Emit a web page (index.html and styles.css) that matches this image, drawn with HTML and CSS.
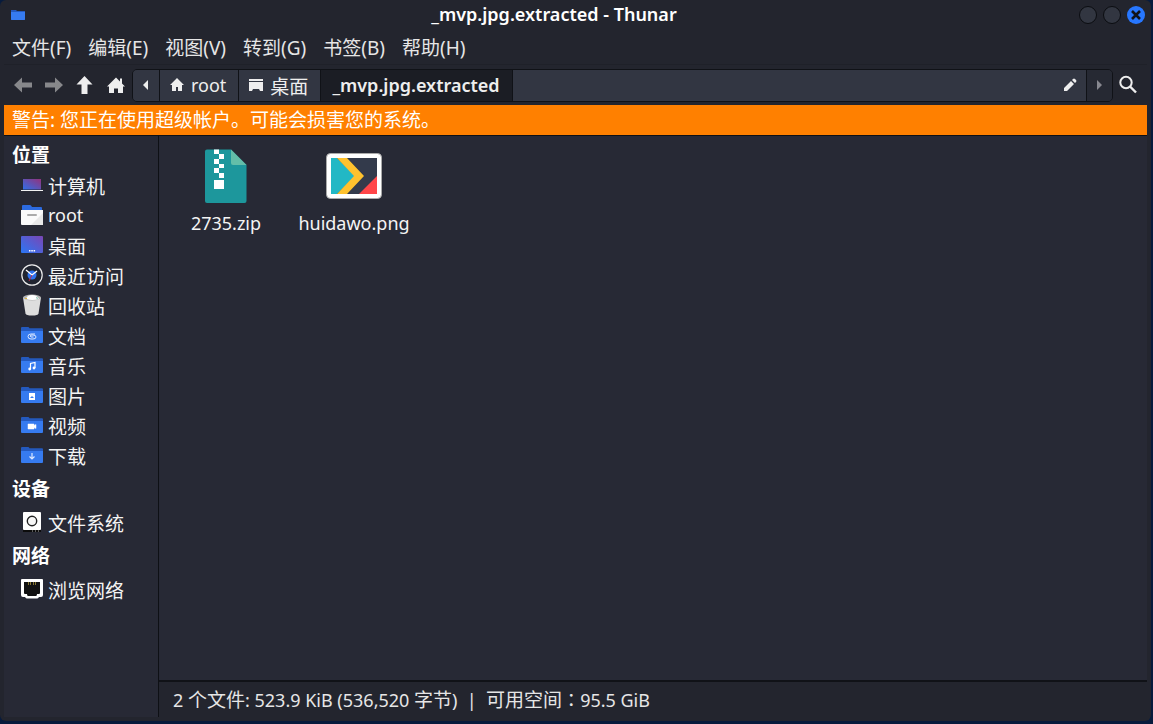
FILE: index.html
```html
<!DOCTYPE html>
<html lang="zh-CN">
<head>
<meta charset="utf-8">
<title>_mvp.jpg.extracted - Thunar</title>
<link rel="stylesheet" href="styles.css">
</head>
<body>
<svg class="defs" aria-hidden="true">
  <defs>
    <linearGradient id="screen" x1="0" y1="1" x2="1" y2="0"><stop offset="0" stop-color="#2f6fe8"/><stop offset="1" stop-color="#93327c"/></linearGradient>
    <linearGradient id="desk" x1="0" y1="1" x2="1" y2="0"><stop offset="0" stop-color="#2a77f5"/><stop offset="1" stop-color="#7b46b4"/></linearGradient>
    <symbol id="folder" viewBox="0 0 22 22"><path d="M0 5V4q0-1 1-1h6q1 0 1.500 1.200H21q1 0 1 1V9H0z" fill="#2459bd"/><path d="M0 7h22v11q0 1-1 1H1q-1 0-1-1z" fill="#367bf0"/></symbol>
  </defs>
</svg>
<div class="window">
  <header class="titlebar">
    <svg class="app-icon" viewBox="0 0 14 10"><path d="M0 0h5l1 1h8v9H0z" fill="#2459bd"/><path d="M0 2h14v7q0 1-1 1H1q-1 0-1-1z" fill="#367bf0"/></svg>
    <h1 class="title">_mvp.jpg.extracted - Thunar</h1>
    <div class="controls">
      <button class="control" type="button" aria-label="最小化"></button>
      <button class="control" type="button" aria-label="最大化"></button>
      <button class="control close" type="button" aria-label="关闭"><svg viewBox="0 0 18 18"><path d="M5 5l8 8M13 5l-8 8" stroke="#10131a" stroke-width="2.600"/></svg></button>
    </div>
  </header>
  <nav class="menubar">
    <button type="button">文件(F)</button>
    <button type="button">编辑(E)</button>
    <button type="button">视图(V)</button>
    <button type="button">转到(G)</button>
    <button type="button">书签(B)</button>
    <button type="button">帮助(H)</button>
  </nav>
  <div class="toolbar">
    <button class="tool dim" type="button" aria-label="后退"><svg viewBox="0 0 20 20"><path d="M1 10l8-7.500v5h10v5H9v5z" fill="currentColor"/></svg></button>
    <button class="tool dim" type="button" aria-label="前进"><svg viewBox="0 0 20 20"><path d="M19 10l-8-7.500v5H1v5h10v5z" fill="currentColor"/></svg></button>
    <button class="tool" type="button" aria-label="上级"><svg viewBox="0 0 20 20"><path d="M9.500 1l8 8.500h-5V19h-6V9.500h-5z" fill="currentColor"/></svg></button>
    <button class="tool" type="button" aria-label="主目录"><svg viewBox="0 0 20 20"><path d="M10 2.500l4 4v-3h2v5l3 3h-2V18h-5v-4.500H8V18H3v-6.500H1z" fill="currentColor"/></svg></button>
    <div class="pathbar">
      <button class="crumb arrow" type="button" aria-label="向左"><svg viewBox="0 0 6 10"><path d="M5 0v10L0 5z" fill="currentColor"/></svg></button>
      <button class="crumb" type="button"><svg viewBox="0 0 16 16"><path d="M8 1l7 7h-2v6h-4v-4H7v4H3V8H1z" fill="currentColor"/></svg>root</button>
      <button class="crumb" type="button"><svg viewBox="0 0 16 16"><path d="M1 2h14v2H1zM1 5h14v9h-3l-1-2H5l-1 2H1z" fill="currentColor"/></svg><span class="cjk low">桌面</span></button>
      <button class="crumb current" type="button">_mvp.jpg.extracted</button>
      <button class="crumb edit" type="button" aria-label="编辑路径"><svg viewBox="0 0 14 14"><path d="M1 10l7-7 3 3-7 7H1zM9 2l1-1q1-1 2 0l1 1q1 1 0 2l-1 1z" fill="currentColor"/></svg></button>
      <button class="crumb arrow off" type="button" aria-label="向右"><svg viewBox="0 0 6 10"><path d="M0 0v10l5-5z" fill="currentColor"/></svg></button>
    </div>
    <button class="tool search" type="button" aria-label="搜索"><svg viewBox="0 0 20 20"><circle cx="8" cy="7.500" r="5.700" fill="none" stroke="currentColor" stroke-width="2"/><path d="M12 11.500l6 6" stroke="currentColor" stroke-width="2.400"/></svg></button>
  </div>
  <p class="warning">警告: 您正在使用超级帐户。可能会损害您的系统。</p>
  <div class="body">
    <aside class="sidebar">
      <h2>位置</h2>
      <a href="#"><svg viewBox="0 0 22 22"><path d="M2 5h18v10.500H2z" fill="url(#screen)"/><path d="M0 16h22v1H0z" fill="#f2f2f2"/></svg><span class="cjk low">计算机</span></a>
      <a href="#"><svg viewBox="0 0 22 22"><path d="M1 6V2q0-1 1-1h7q1 0 2 2h9q1 0 1 1v2z" fill="#2c6be0"/><path d="M0 6h22v14q0 1-1 1H1q-1 0-1-1z" fill="#fafafa"/><path d="M22 9v12H10z" fill="#e8e8e8"/><rect x="6" y="10" width="10" height="2" rx="1" fill="#aaa"/></svg>root</a>
      <a href="#"><svg viewBox="0 0 22 22"><rect y="2" width="22" height="17" rx="1" fill="url(#desk)"/><path d="M8 16h1.500v1.500H8zM10.300 16h1.500v1.500h-1.500zM12.600 16h1.500v1.500h-1.500z" fill="#fff"/></svg><span class="cjk low">桌面</span></a>
      <a href="#"><svg viewBox="0 0 22 22"><circle cx="11" cy="11" r="10.200" fill="#202430" stroke="#ececec" stroke-width="1.200"/><circle cx="11" cy="11" r="4.500" fill="#2e72ef"/><path d="M5 6l6 5 5-4" fill="none" stroke="#fff" stroke-width="1.300"/><path d="M11 11l-3 6" stroke="#b82c4b"/></svg><span class="cjk low">最近访问</span></a>
      <a href="#"><svg viewBox="0 0 22 22"><path d="M2 3.500l2.500 16q.5 2 6.500 2t6.500-2L20 3.500z" fill="#dedede"/><ellipse cx="11" cy="3.500" rx="9" ry="3" fill="#b5b5b5"/><path d="M5 5q1-4 6-4t7 4q-7 2-13 0" fill="#fff"/><path d="M4 4h2v1H4z" fill="#e0b73a"/><path d="M15 3l2 1-1 1z" fill="#49a88b"/></svg><span class="cjk low">回收站</span></a>
      <a href="#"><svg viewBox="0 0 22 22"><use href="#folder"/><path d="M14 10h-4q-3 0-3 2.500T10 15h2q3 0 3-2t-3-2h-2q-1.500 1 0 2h2.500" fill="none" stroke="#dce8ff"/></svg><span class="cjk low">文档</span></a>
      <a href="#"><svg viewBox="0 0 22 22"><use href="#folder"/><path d="M9.500 15V9.500l4.500-1V14" fill="none" stroke="#fff" stroke-width="1.200"/><circle cx="8.700" cy="15" r="1.400" fill="#fff"/><circle cx="13" cy="14" r="1.400" fill="#fff"/></svg><span class="cjk low">音乐</span></a>
      <a href="#"><svg viewBox="0 0 22 22"><use href="#folder"/><path d="M8 9h6v7H8z" fill="#fff"/><path d="M9 14l2-2 2 2z" fill="#367bf0"/></svg><span class="cjk low">图片</span></a>
      <a href="#"><svg viewBox="0 0 22 22"><use href="#folder"/><path d="M7 10h6v1.500l2-1v4l-2-1V15H7z" fill="#fff" stroke="#fff" stroke-width=".500"/></svg><span class="cjk low">视频</span></a>
      <a href="#"><svg viewBox="0 0 22 22"><use href="#folder"/><path d="M11 9v6M8.500 12.500L11 15l2.500-2.500" fill="none" stroke="#dce8ff" stroke-width="1.200"/></svg><span class="cjk low">下载</span></a>
      <h2>设备</h2>
      <a href="#"><svg viewBox="0 0 22 22"><rect x="2" y="1" width="18" height="18" rx="1" fill="#fff"/><circle cx="11" cy="10" r="4.700" fill="#f7f7f7" stroke="#222" stroke-width="1.400"/><path d="M2 19h18v2H2z" fill="#0c0c0c"/><path d="M11 20h1M14 20h1M17 20h1" stroke="#aaa"/></svg><span class="cjk low">文件系统</span></a>
      <h2>网络</h2>
      <a href="#"><svg viewBox="0 0 22 22"><path d="M1 1h20q1 0 1 1v15q0 2-2 2h-2q-1 1.500-2 1.500H6Q5 20.500 4 19H2q-2 0-2-2V2q0-1 1-1z" fill="#fff"/><path d="M3 4h16v11q0 1-1 1h-2q0 2-1 2H7q-1 0-1-2H4q-1 0-1-1z" fill="#111"/><path d="M7.500 4v3M9.500 4v3M12.500 4v3M14.500 4v3" stroke="#867532"/></svg><span class="cjk low">浏览网络</span></a>
    </aside>
    <main class="content">
      <div class="files">
        <a class="file" href="#"><svg viewBox="0 0 64 64"><path d="M13 4.500h24l15.500 15.500v36q0 2-2 2H13q-2 0-2-2v-49.500q0-2 2-2z" fill="#1d979c"/><path d="M37 4.500L52.500 20H39q-2 0-2-2z" fill="#63bea9"/><path d="M20 4.500h5V9h-5zM25 9h5v5h-5zM20 14h5v5h-5zM25 19h5v4h-5zM20 23h5v5h-5zM25 28h5v5h-5zM20 35h10v9H20z" fill="#fff"/></svg>2735.zip</a>
        <a class="file" href="#"><svg viewBox="0 0 64 64"><rect x="4.500" y="8.500" width="55" height="45" rx="4" fill="#fff" stroke="#aaa"/><path d="M9 13h46v36H9z" fill="#333a4b"/><path d="M9 13h6l18 18-18 18H9z" fill="#22b8c5"/><path d="M15 13h10l17 18-17 18H15l17-18z" fill="#ffc22e"/><path d="M55 31v18H37z" fill="#ff4649"/></svg>huidawo.png</a>
      </div>
      <footer class="status">2 <span class="cjk">个文件</span>: 523.9 KiB (536,520 <span class="cjk">字节</span>)&nbsp; |&nbsp; <span class="cjk">可用空间</span><span class="colon" lang="zh-TW">：</span>95.5 GiB</footer>
    </main>
  </div>
</div>
</body>
</html>
```
FILE: styles.css
```css
* { box-sizing: border-box; }
html, body { height: 100%; }
body {
  margin: 0;
  padding: 0 2px 3px 0;
  background: #071b3d;
  color: #f4f4f4;
  font: 18px/30px "Noto Sans", "Noto Sans CJK SC", sans-serif;
}
button { margin: 0; padding: 0; border: 0; background: none; color: inherit; font: inherit; }
a { color: inherit; text-decoration: none; }
svg { display: block; flex: none; }
.defs { position: absolute; width: 0; height: 0; }
.cjk { font-size: 19px; }
.low { padding-top: 4px; }
.colon { font-family: "Noto Sans CJK TC", sans-serif; }

.window {
  display: flex;
  flex-direction: column;
  height: 100%;
  padding: 0 4px 4px;
  background: #23252e;
  border-radius: 6px;
}
.titlebar { display: flex; align-items: center; height: 31px; padding-bottom: 2px; flex: none; }
.app-icon { width: 14px; height: 10px; margin-left: 7px; }
.title { flex: 1; margin: 0; padding: 0 0 2px 4px; font-size: 18px; line-height: 26px; font-weight: 600; text-align: center; color: #fff; }
.controls { display: flex; gap: 6px; padding: 0 2px 0 0; }
.control { width: 18px; height: 18px; border: 1px solid #0b0d11; border-radius: 50%; background: #323641; }
.close { border: 0; background: #2777ff; }
.close svg { width: 18px; height: 18px; }

.menubar { display: flex; gap: 17px; height: 34px; padding-left: 8px; border-bottom: 1px solid #1f2129; flex: none; font-size: 19px; line-height: 32px; color: #e6e6e6; }
.toolbar { display: flex; align-items: center; height: 40px; flex: none; padding-left: 9px; color: #eee; }
.tool { margin-right: 11px; }
.tool svg { width: 20px; height: 20px; }
.tool.dim { color: #87888b; }
.tool:nth-child(4) { margin-right: 6px; }
.tool.search { margin: 0 9px 0 5px; }
.pathbar { display: flex; flex: 1; height: 33px; border: 1px solid #101217; border-radius: 5px; overflow: hidden; }
.crumb { display: flex; align-items: center; gap: 6px; padding: 0 12px 0 9px; border-right: 1px solid #101217; background: #323642; }
.crumb svg { width: 16px; height: 16px; }
.crumb.arrow { justify-content: center; width: 27px; padding: 0; }
.crumb.arrow svg { width: 6px; height: 10px; }
.crumb.current { padding: 0 12px 0 11px; background: #1b1d24; font-weight: 600; }
.crumb.edit { flex: 1; justify-content: flex-end; padding-right: 9px; }
.crumb.edit svg { width: 14px; height: 14px; }
.crumb.off { width: 25px; border: 0; background: #262933; color: #878890; }

.warning { margin: 0; padding: 0 0 0 8px; height: 30px; background: #ff8000; color: #fff; font-size: 19px; flex: none; }
.body { display: flex; flex: 1; min-height: 0; border-top: 1px solid #0e1015; background: #272935; }
.sidebar { width: 155px; border-right: 1px solid #0e1015; overflow: hidden; flex: none; }
.sidebar h2 { margin: 0; padding: 4px 0 3px 8px; font-size: 19px; line-height: 30px; font-weight: 700; color: #fff; }
.sidebar h2:first-child { padding-bottom: 0; }
.sidebar a { display: flex; align-items: center; gap: 5px; height: 30px; padding-left: 17px; }
.sidebar svg { width: 22px; height: 22px; }
.content { display: flex; flex-direction: column; flex: 1; min-width: 0; }
.files { display: flex; align-items: flex-start; flex: 1; padding: 9px 3px; }
.file { display: flex; flex-direction: column; align-items: center; width: 128px; line-height: 28px; }
.file svg { width: 64px; height: 64px; }
.status { height: 37px; padding: 2px 14px 0; border-top: 2px solid #101217; background: #23252e; color: #e6e6e6; }
```
